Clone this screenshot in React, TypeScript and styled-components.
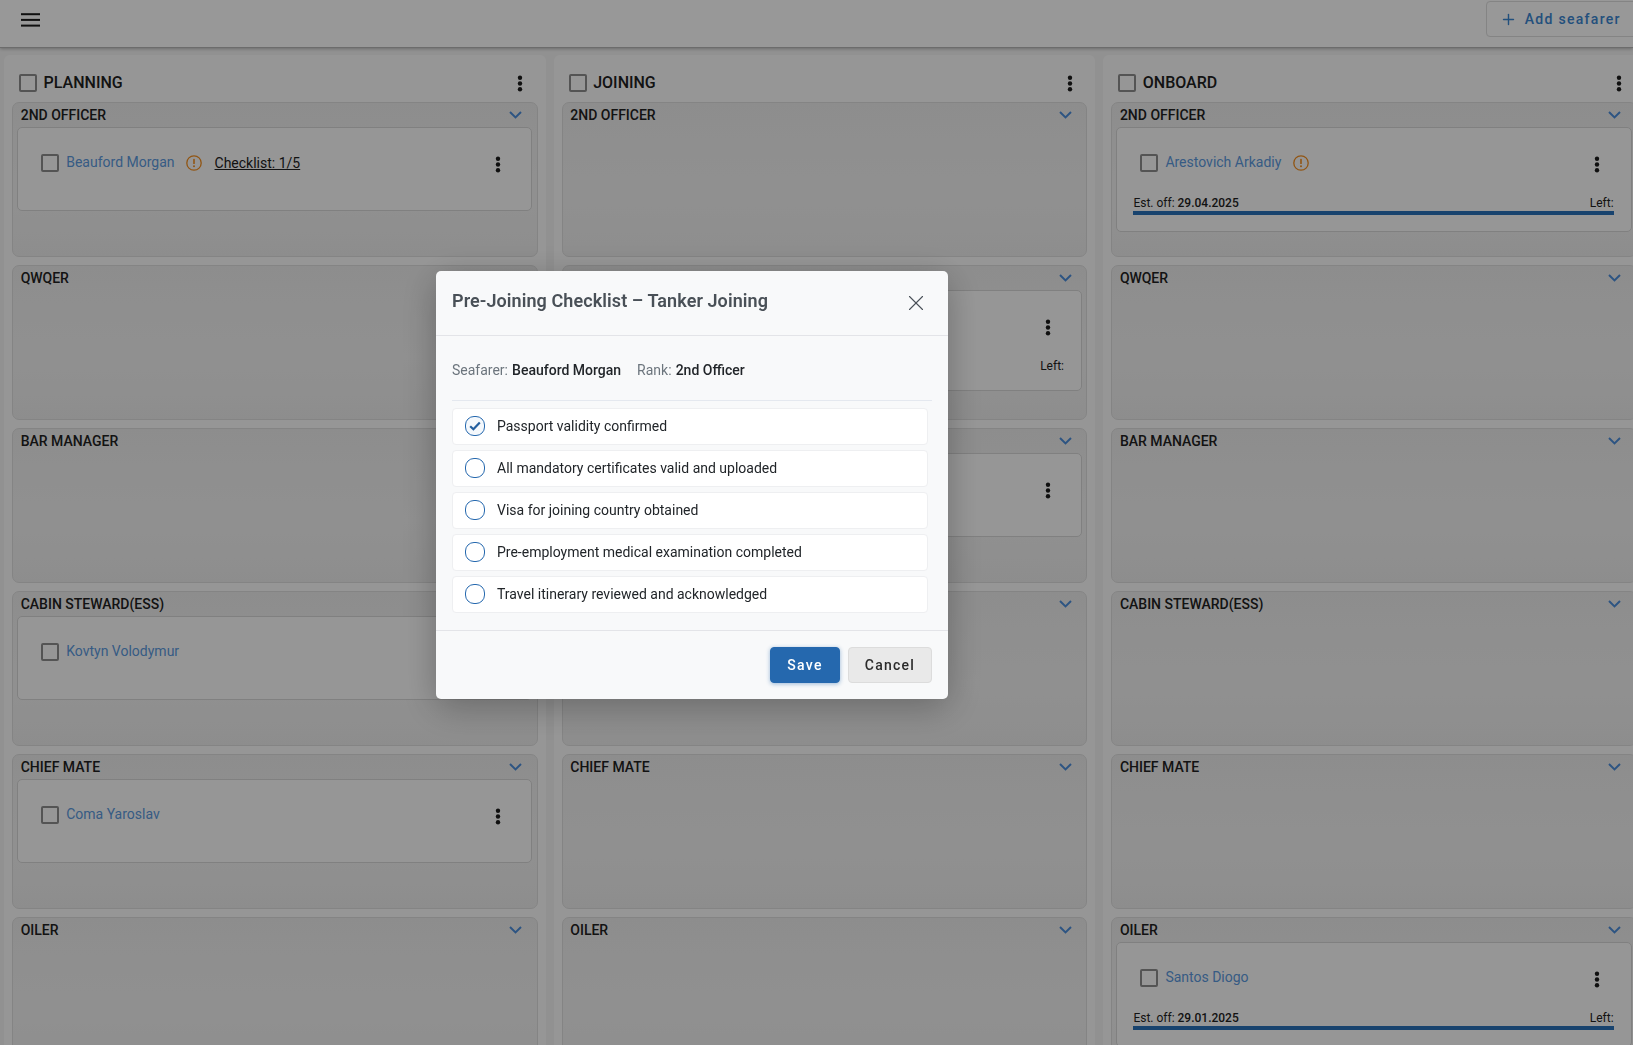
import React from "react";
import styled, { createGlobalStyle } from "styled-components";
import { Plus, X } from "lucide-react";

const Global = createGlobalStyle`
  html, body { margin: 0; padding: 0; height: 100%; overflow: hidden; }
  body { font-family: Roboto, "Liberation Sans", sans-serif; background: #f2f2f2; color: #212121; }
  * { box-sizing: border-box; }
`;

const Page = styled.div`
  height: 100vh;
  overflow: hidden;
`;
const TopBar = styled.header`
  height: 48px;
  background: #fdfdfd;
  border-bottom: 1px solid #b4b4b4;
  box-shadow: 0 1px 3px rgba(0, 0, 0, 0.25);
  display: flex;
  align-items: flex-start;
  justify-content: space-between;
  padding: 1px 0 0 21px;
`;
const MenuButton = styled.svg`
  margin-top: 12px;
  color: #1c1c1c;
`;
const AddButton = styled.div`
  height: 36px;
  width: 162px;
  margin-right: -15px;
  border: 1px solid #dcdcdc;
  border-radius: 4px;
  display: flex;
  align-items: center;
  gap: 8.2px;
  padding-left: 12.5px;
  color: #3a85d0;
  font-size: 14px;
  font-weight: 500;
  letter-spacing: 1.3px;
`;
const Board = styled.main`
  display: grid;
  grid-template-columns: repeat(3, 541.6px);
  gap: 8px;
  padding: 7px 0 0 4px;
`;
const Column = styled.section`
  background: #fbfbfb;
  border-radius: 6px;
  padding: 0 8px;
  height: 1100px;
`;
const ColumnHead = styled.div`
  height: 47px;
  display: flex;
  align-items: center;
  padding: 8px 14.5px 0 7px;
  svg { margin-top: 2px; }
`;
const ColumnTitle = styled.span`
  font-size: 16px;
  font-weight: 500;
  margin-left: 6.6px;
  flex: 1;
`;
const Groups = styled.div`
  display: grid;
  grid-auto-rows: 155px;
  gap: 8px;
`;
const Group = styled.div`
  border: 1px solid #dddddd;
  border-radius: 7px;
  background: linear-gradient(180deg, #ececec, #f1f1f1 60%, #ececec);
  padding: 0 4.2px;
`;
const GroupHead = styled.div`
  height: 23.5px;
  display: flex;
  align-items: center;
  justify-content: space-between;
  padding: 1px 10.5px 0 3.5px;
  font-size: 14px;
  font-weight: 500;
  color: #212121;
  text-transform: uppercase;
`;
const Chevron = styled.svg`
  color: #4b8cd9;
`;
const Card = styled.div<{ $h: number }>`
  height: ${(p) => p.$h}px;
  border: 1px solid #d6d6d6;
  border-radius: 5px;
  background: #fbfbfb;
  padding: 25px 17px 0 16px;
`;
const CardRow = styled.div`
  height: 20px;
  display: flex;
  align-items: center;
  padding: 0 13.5px 0 7px;
  font-size: 14px;
  > svg:last-child { margin-top: 4px; }
`;
const Name = styled.span`
  color: #5c98dc;
  margin: -2px 0 0 7px;
`;
const WarnIcon = styled.svg`
  color: #f28e20;
  margin-left: 11.5px;
  flex: none;
`;
const ChecklistLink = styled.span`
  margin-left: 12.5px;
  text-decoration: underline;
  color: #212121;
`;
const Spacer = styled.span`
  flex: 1;
`;
const CardFoot = styled.div`
  margin-top: 23px;
  display: flex;
  justify-content: space-between;
  align-items: center;
  font-size: 12px;
  height: 14px;
  color: #212121;
  b { font-weight: 500; }
`;
const Bar = styled.div`
  height: 4px;
  margin-top: 1px;
  background: #2871b7;
`;
const SquareBox = styled.span`
  width: 18px;
  height: 18px;
  flex: none;
  border: 2px solid #8c8c8c;
  border-radius: 2px;
`;
const Overlay = styled.div`
  position: fixed;
  inset: 0;
  background: rgba(0, 0, 0, 0.4);
  padding: 271px 0 0 436px;
`;
const Modal = styled.div`
  width: 512px;
  height: 427.5px;
  background: #f8f9fa;
  border-radius: 5px;
  box-shadow: 0 8px 36px rgba(0, 0, 0, 0.28);
  display: flex;
  flex-direction: column;
`;
const ModalHead = styled.div`
  height: 65px;
  border-bottom: 1px solid #e3e4e8;
  padding: 0 19px 7px 16px;
  display: flex;
  align-items: center;
  justify-content: space-between;
  color: #495057;
  svg { margin-top: 6px; }
`;
const ModalTitle = styled.h2`
  margin: 2px 0 0;
  font-size: 18px;
  font-weight: 600;
  letter-spacing: 0.08px;
  color: #495057;
`;
const ModalBody = styled.div`
  flex: 1;
  padding: 0 16px;
`;
const Meta = styled.div`
  height: 65px;
  border-bottom: 1px solid #e4e8ef;
  display: flex;
  gap: 16px;
  align-items: center;
  font-size: 14px;
  color: #6c757d;
  padding-top: 3px;
  b { font-weight: 500; color: #212529; margin-left: 0.6px; }
`;
const Items = styled.div`
  margin-top: 6.9px;
  display: grid;
  grid-auto-rows: 37px;
  gap: 5px;
  width: 476px;
`;
const Item = styled.div`
  background: #fff;
  border: 1px solid #eeeff1;
  border-radius: 4px;
  display: flex;
  align-items: center;
  gap: 12px;
  padding-left: 12px;
  font-size: 14px;
  color: #212529;
`;
const Circle = styled.span<{ $on?: boolean }>`
  width: 20px;
  height: 20px;
  flex: none;
  border: 1.6px solid #2568ae;
  border-radius: 9px;
  background: ${(p) => (p.$on ? "#f4f8fc" : "#fff")};
  display: flex;
  align-items: center;
  justify-content: center;
  color: #235f9f;
`;
const ModalFoot = styled.div`
  height: 69px;
  border-top: 1px solid #e3e4e8;
  display: flex;
  justify-content: flex-end;
  gap: 8px;
  padding: 16px 16px 0 0;
`;
const Btn = styled.button<{ $primary?: boolean }>`
  height: 36px;
  width: ${(p) => (p.$primary ? 70 : 84)}px;
  border-radius: 4px;
  border: 1px solid ${(p) => (p.$primary ? "#2568ae" : "#dcdcdc")};
  background: ${(p) => (p.$primary ? "#2568ae" : "#e9e9e9")};
  color: ${(p) => (p.$primary ? "#fff" : "#2b2b2b")};
  font: 500 14px Roboto, sans-serif;
  letter-spacing: 1.25px;
  box-shadow: ${(p) => (p.$primary ? "0 1px 4px rgba(37,104,174,.45)" : "none")};
`;

const Kebab = () => (
  <svg width="6" height="17" viewBox="0 0 6 17" fill="#1c1c1c">
    <circle cx="3" cy="2.7" r="2.2" />
    <circle cx="3" cy="8.5" r="2.2" />
    <circle cx="3" cy="14.3" r="2.2" />
  </svg>
);

const Warn = () => (
  <WarnIcon width="16" height="16" viewBox="0 0 16 16" fill="none">
    <circle cx="8" cy="8" r="7.2" stroke="currentColor" strokeWidth="1.3" />
    <rect x="7.2" y="3.8" width="1.6" height="5.2" rx="0.6" fill="currentColor" />
    <circle cx="8" cy="11.2" r="1" fill="currentColor" />
  </WarnIcon>
);

type CardData = {
  name?: string;
  warn?: boolean;
  checklist?: string;
  off?: string;
  left?: boolean;
  bar?: boolean;
  h: number;
};

const ranks = ["2nd Officer", "Qwqer", "Bar Manager", "Cabin Steward(ess)", "Chief Mate", "Oiler"];

const columns: { title: string; cards: Record<number, CardData> }[] = [
  {
    title: "PLANNING",
    cards: {
      0: { name: "Beauford Morgan", warn: true, checklist: "Checklist: 1/5", h: 84.5 },
      3: { name: "Kovtyn Volodymur", h: 84.5 },
      4: { name: "Coma Yaroslav", h: 84.5 },
    },
  },
  {
    title: "JOINING",
    cards: {
      1: { left: true, h: 101 },
      2: { h: 84.5 },
    },
  },
  {
    title: "ONBOARD",
    cards: {
      0: { name: "Arestovich Arkadiy", warn: true, off: "29.04.2025", left: true, bar: true, h: 105 },
      5: { name: "Santos Diogo", off: "29.01.2025", left: true, bar: true, h: 105 },
    },
  },
];

const checklist = [
  "Passport validity confirmed",
  "All mandatory certificates valid and uploaded",
  "Visa for joining country obtained",
  "Pre-employment medical examination completed",
  "Travel itinerary reviewed and acknowledged",
];

function SeafarerCard({ card }: { card: CardData }) {
  return (
    <Card $h={card.h}>
      <CardRow>
        {card.name && <SquareBox />}
        {card.name && <Name>{card.name}</Name>}
        {card.warn && <Warn />}
        {card.checklist && <ChecklistLink>{card.checklist}</ChecklistLink>}
        <Spacer />
        <Kebab />
      </CardRow>
      {(card.off || card.left) && (
        <CardFoot>
          <span>{card.off && <>Est. off: <b>{card.off}</b></>}</span>
          {card.left && <span>Left:</span>}
        </CardFoot>
      )}
      {card.bar && <Bar />}
    </Card>
  );
}

export default function App() {
  return (
    <Page>
      <Global />
      <TopBar>
        <MenuButton width="19" height="14" viewBox="0 0 19 14" fill="currentColor">
          <rect x="0" y="0.2" width="19" height="2" />
          <rect x="0" y="5.9" width="19" height="2" />
          <rect x="0" y="11.6" width="19" height="2" />
        </MenuButton>
        <AddButton>
          <Plus size={17} strokeWidth={2} />
          Add seafarer
        </AddButton>
      </TopBar>
      <Board>
        {columns.map((col) => (
          <Column key={col.title}>
            <ColumnHead>
              <SquareBox />
              <ColumnTitle>{col.title}</ColumnTitle>
              <Kebab />
            </ColumnHead>
            <Groups>
              {ranks.map((rank, i) => (
                <Group key={rank}>
                  <GroupHead>
                    {rank}
                    <Chevron width="13" height="8" viewBox="0 0 13 8" fill="none">
                      <path d="M1 1 L6.5 6.4 L12 1" stroke="currentColor" strokeWidth="2" />
                    </Chevron>
                  </GroupHead>
                  {col.cards[i] && <SeafarerCard card={col.cards[i]} />}
                </Group>
              ))}
            </Groups>
          </Column>
        ))}
      </Board>
      <Overlay>
        <Modal>
          <ModalHead>
            <ModalTitle>Pre-Joining Checklist – Tanker Joining</ModalTitle>
            <X size={26} strokeWidth={1.05} />
          </ModalHead>
          <ModalBody>
            <Meta>
              <span>
                Seafarer: <b>Beauford Morgan</b>
              </span>
              <span>
                Rank: <b>2nd Officer</b>
              </span>
            </Meta>
            <Items>
              {checklist.map((text, i) => (
                <Item key={text}>
                  <Circle $on={i === 0}>
                    {i === 0 && (
                      <svg width="12" height="10" viewBox="0 0 12 10" fill="none">
                        <path d="M1.2 5.2 L4.4 8.2 L10.8 1.4" stroke="currentColor" strokeWidth="2.2" />
                      </svg>
                    )}
                  </Circle>
                  {text}
                </Item>
              ))}
            </Items>
          </ModalBody>
          <ModalFoot>
            <Btn $primary>Save</Btn>
            <Btn>Cancel</Btn>
          </ModalFoot>
        </Modal>
      </Overlay>
    </Page>
  );
}
